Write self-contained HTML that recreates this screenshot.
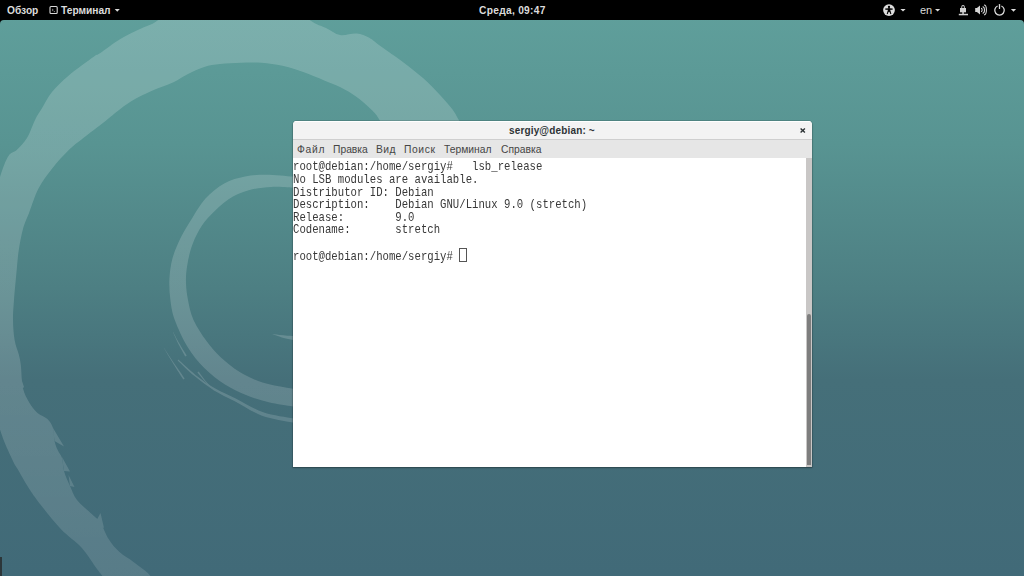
<!DOCTYPE html>
<html><head><meta charset="utf-8">
<style>
html,body{margin:0;padding:0;width:1024px;height:576px;overflow:hidden;background:#000;}
body{position:relative;font-family:"Liberation Sans",sans-serif;}
#bg{position:absolute;left:0;top:0;width:1024px;height:576px;}
#topbar{position:absolute;left:0;top:0;width:1024px;height:20px;background:#000;color:#dcdcdc;font-size:11px;}
#topbar .t{position:absolute;top:4px;font-weight:bold;font-size:10.2px;line-height:13px;white-space:nowrap;}
#win{position:absolute;left:293px;top:121px;width:519px;height:346px;background:#fff;border-radius:4px 4px 0 0;box-shadow:0 0 0 1px rgba(0,0,0,0.1),0 1px 2px rgba(0,0,0,0.3);overflow:hidden;}
#title{position:absolute;left:0;top:0;width:519px;height:18px;background:#f3f3f3;border-bottom:1px solid #cfcfcf;box-shadow:inset 0 1px 0 #fff;}
#title .tx{position:absolute;left:216px;top:4px;font-weight:bold;font-size:10px;letter-spacing:0.15px;line-height:12px;color:#2e3436;white-space:nowrap;}
#menu{position:absolute;left:0;top:19px;width:519px;height:18px;background:#e6e6e6;}
#menu span{position:absolute;top:4px;font-size:10.3px;line-height:12px;color:#454545;white-space:nowrap;}
#term{position:absolute;left:0;top:37px;width:513px;height:309px;background:#fff;}
#term pre{position:absolute;left:0;top:3px;margin:0;font-family:"Liberation Mono",monospace;font-size:10.667px;line-height:11.087px;color:#383838;transform:scaleY(1.15);transform-origin:0 0;}
#trough{position:absolute;left:513px;top:37px;width:6px;height:309px;background:#c9c7c6;}
#slider{position:absolute;left:514px;top:193px;width:4px;height:151px;background:#7e7e7e;border-radius:2px 2px 0 0;}
#cursor{position:absolute;left:166px;top:90px;width:6px;height:12px;border:1px solid #555;}
</style></head>
<body>
<svg id="bg" width="1024" height="576" viewBox="0 0 1024 576">
  <defs>
    <linearGradient id="g" gradientUnits="userSpaceOnUse" x1="0" y1="0" x2="0" y2="576">
      <stop offset="0" stop-color="#60a09c"/>
      <stop offset="0.25" stop-color="#589492"/>
      <stop offset="0.5" stop-color="#4d7f83"/>
      <stop offset="0.66" stop-color="#456f79"/>
      <stop offset="1" stop-color="#416a78"/>
    </linearGradient>
    <mask id="bm" maskUnits="userSpaceOnUse" x="-50" y="-50" width="1124" height="676"><rect x="-50" y="-50" width="1124" height="676" fill="url(#bandg)"/></mask>
    <linearGradient id="bandg" gradientUnits="userSpaceOnUse" x1="0" y1="0" x2="0" y2="576">
      <stop offset="0" stop-color="#fff" stop-opacity="0.18"/>
      <stop offset="0.55" stop-color="#fff" stop-opacity="0.17"/>
      <stop offset="1" stop-color="#fff" stop-opacity="0.12"/>
    </linearGradient>
  </defs>
  <rect x="0" y="0" width="1024" height="576" fill="url(#g)"/>
  <g fill="#fff" mask="url(#bm)">
    <path id="outerband" d="M102.5,576.0 C101.6,574.8 100.5,573.7 97.0,569.0 C93.5,564.3 87.7,554.4 81.7,547.7 C75.7,541.0 67.8,536.2 60.8,528.9 C53.8,521.6 45.1,510.4 40.0,503.9 C34.9,497.4 33.6,495.6 30.0,490.0 C26.4,484.4 21.2,475.2 18.3,470.2 C15.4,465.2 15.6,466.8 12.5,460.0 C9.4,453.2 4.1,442.9 0.0,429.6 C-4.1,416.3 -8.7,401.6 -12.0,380.0 C-15.3,358.4 -20.0,326.7 -20.0,300.0 C-20.0,273.3 -15.3,240.5 -12.0,220.0 C-8.7,199.5 -3.4,187.6 0.0,177.0 C3.4,166.4 5.5,160.8 8.3,156.2 C11.1,151.8 13.6,153.0 16.7,150.0 C19.8,147.0 23.9,143.1 27.0,138.0 C30.1,132.9 32.9,124.1 35.4,119.2 C37.9,114.3 38.9,113.3 41.7,108.8 C44.5,104.2 47.5,97.6 52.0,92.0 C56.5,86.4 61.8,81.3 68.8,75.4 C75.7,69.5 88.5,60.4 93.8,56.7 C99.0,53.0 95.5,56.3 100.0,53.3 C104.5,50.3 113.8,42.9 120.8,38.8 C127.8,34.6 135.4,31.4 141.7,28.3 C147.9,25.2 151.1,25.6 158.3,20.0 C165.5,14.4 164.7,-0.8 185.0,-5.0 C205.3,-9.2 259.2,-9.2 280.0,-5.0 C300.8,-0.8 301.9,14.5 309.6,20.0 C317.3,25.5 320.9,25.5 326.0,28.0 C331.1,30.5 334.9,34.1 340.0,35.0 C345.1,35.9 351.8,33.0 356.7,33.5 C361.6,34.0 365.0,35.5 369.2,37.7 C373.4,40.0 376.1,43.0 381.7,47.0 C387.2,51.0 395.6,56.5 402.5,61.7 C409.4,66.9 417.1,72.8 423.3,78.3 C429.6,83.8 435.1,89.8 440.0,95.0 C444.9,100.2 449.4,105.4 452.5,109.6 C455.6,113.8 455.8,114.9 458.8,120.0 C461.7,125.1 468.1,136.7 470.0,140.0 L390.0,140.0 C388.3,136.7 382.7,125.1 379.6,120.0 C376.5,114.9 375.1,113.4 371.2,109.6 C367.4,105.8 361.9,100.8 356.7,97.0 C351.5,93.2 345.4,89.8 340.0,87.0 C334.6,84.2 330.3,82.9 324.2,80.4 C318.1,77.9 310.2,74.4 303.3,72.0 C296.4,69.6 289.4,67.3 282.5,65.8 C275.6,64.2 268.6,63.2 261.7,62.7 C254.8,62.2 247.8,62.5 240.8,62.7 C233.9,62.9 226.1,63.3 220.0,64.0 C213.9,64.7 209.6,65.2 204.2,66.9 C198.8,68.6 192.7,71.6 187.5,74.2 C182.3,76.8 178.8,79.7 172.9,82.5 C167.0,85.3 158.9,87.7 152.0,90.8 C145.1,93.9 137.1,97.8 131.2,101.2 C125.4,104.7 121.2,108.2 116.7,111.7 C112.2,115.2 109.8,117.6 104.2,122.0 C98.6,126.4 89.2,133.3 83.3,138.0 C77.4,142.7 74.0,144.9 68.8,150.0 C63.5,155.1 57.0,162.3 52.0,168.8 C47.0,175.2 42.3,181.2 38.5,188.5 C34.7,195.8 31.8,205.7 29.2,212.5 C26.6,219.3 24.6,222.9 22.9,229.2 C21.2,235.4 19.8,243.2 18.8,250.0 C17.7,256.8 17.5,261.7 16.7,270.0 C15.9,278.3 14.6,291.7 14.0,300.0 C13.4,308.3 12.9,313.3 13.0,320.0 C13.1,326.7 13.6,334.2 14.6,340.0 C15.6,345.8 17.7,350.4 18.8,354.6 C19.8,358.8 20.1,359.4 20.8,365.0 C21.5,370.6 21.5,381.8 22.9,388.0 C24.3,394.2 26.8,398.3 29.2,402.5 C31.6,406.7 34.5,410.2 37.5,413.0 C40.5,415.8 44.8,416.5 47.4,419.0 C50.0,421.5 51.8,424.3 53.0,428.0 C54.2,431.7 53.7,437.3 54.5,441.0 C55.3,444.7 56.5,447.5 57.8,450.3 C59.0,453.1 61.0,454.6 62.0,458.0 C63.0,461.4 62.7,466.3 64.0,471.0 C65.3,475.7 67.8,481.2 70.0,486.0 C72.2,490.8 73.3,495.3 77.0,500.0 C80.7,504.7 88.1,510.5 92.0,514.3 C95.9,518.1 97.6,518.5 100.4,522.7 C103.2,526.9 105.6,534.4 108.8,539.3 C111.9,544.1 115.0,548.0 119.2,551.8 C123.4,555.6 128.6,558.2 133.8,562.2 C138.9,566.3 147.4,571.4 150.4,576.0 C153.4,580.6 160.4,587.7 152.0,590.0 C143.6,592.3 108.7,590.0 100.0,590.0 Z"/>
    <path id="ring" d="M300.0,407.0 C298.8,406.9 298.2,407.3 293.0,406.5 C287.8,405.7 276.6,404.2 268.8,402.3 C261.0,400.4 253.3,397.9 246.0,395.0 C238.7,392.1 231.9,389.1 225.0,384.6 C218.1,380.1 210.5,374.3 204.3,368.0 C198.1,361.7 192.5,355.0 187.6,347.0 C182.7,339.0 177.7,327.8 174.8,320.0 C171.9,312.2 171.3,306.8 170.4,300.0 C169.5,293.2 169.1,286.1 169.4,279.2 C169.8,272.2 170.6,265.2 172.5,258.3 C174.4,251.4 177.6,244.2 180.8,237.5 C184.1,230.8 187.9,224.9 192.0,218.4 C196.1,211.9 200.1,204.3 205.5,198.5 C210.9,192.7 217.7,187.1 224.2,183.4 C230.8,179.7 238.2,177.9 245.1,176.5 C252.0,175.1 257.9,174.7 265.9,174.7 C273.9,174.7 287.3,176.2 293.0,176.5 C298.7,176.8 298.8,176.8 300.0,176.8 L300.0,187.8 C298.8,187.8 297.8,187.8 293.0,187.7 C288.2,187.5 278.5,186.5 271.1,186.9 C263.7,187.3 255.8,188.2 248.6,190.3 C241.4,192.4 234.4,195.4 228.2,199.5 C222.0,203.6 216.0,209.7 211.2,214.6 C206.4,219.5 202.9,223.6 199.6,229.2 C196.3,234.8 193.3,241.7 191.2,247.9 C189.2,254.2 187.9,260.8 187.0,266.7 C186.1,272.6 185.8,277.8 186.0,283.3 C186.2,288.9 186.8,293.9 188.0,300.0 C189.2,306.1 190.4,313.2 193.5,320.0 C196.6,326.8 201.7,334.6 206.3,340.8 C210.9,347.1 215.3,352.3 220.9,357.5 C226.5,362.7 232.8,367.8 239.7,372.0 C246.6,376.2 253.7,379.7 262.6,382.5 C271.5,385.3 286.8,387.7 293.0,388.8 C299.2,389.8 298.8,389.0 300.0,389.0 Z"/>
    <path d="M177.7,360.4 C180.5,363.0 188.4,371.1 194.5,376.1 C200.6,381.2 207.4,386.3 214.1,390.5 C220.8,394.7 226.9,397.1 234.8,401.3 C242.8,405.5 252.4,412.1 262.0,415.7 C271.6,419.2 286.3,421.2 292.6,422.5 C298.9,423.9 298.5,423.7 299.7,423.9 L300.3,419.1 C299.2,419.0 299.6,419.6 293.4,418.5 C287.2,417.3 272.7,415.6 263.2,412.3 C253.7,409.0 244.1,402.7 236.2,398.7 C228.2,394.7 222.1,392.5 215.3,388.5 C208.5,384.6 201.7,379.7 195.5,374.9 C189.4,370.0 181.2,362.2 178.3,359.6 Z"/>
    <path d="M163.9,348.1 C165.5,350.8 170.3,359.0 173.6,364.3 C176.8,369.5 181.6,377.0 183.3,379.5 L184.7,378.5 C183.0,376.0 177.9,368.8 174.4,363.7 C171.0,358.6 165.8,350.6 164.1,347.9 Z"/>
    <path d="M172.9,332.1 C173.8,334.1 176.5,340.2 178.5,344.3 C180.6,348.3 184.1,354.4 185.2,356.5 L186.8,355.5 C185.6,353.6 181.7,347.7 179.5,343.7 C177.2,339.8 174.2,333.9 173.1,331.9 Z"/>
    <path d="M197.4,372.5 C198.8,374.1 202.8,379.2 205.7,382.3 C208.5,385.4 213.1,389.4 214.6,390.9 L214.8,390.7 C213.4,389.2 209.0,384.9 206.3,381.7 C203.6,378.5 199.9,373.2 198.6,371.5 Z"/>
    <path d="M272.0,334.1 C273.8,334.7 278.2,336.5 282.8,337.7 C287.4,338.8 296.9,340.6 299.7,341.2 L300.3,336.8 C297.5,336.5 287.9,335.8 283.2,335.3 C278.5,334.9 273.9,334.1 272.0,333.9 Z"/>
    <path d="M53,428 L64,446.5 L54.5,441 Z M62,457 L70,471.5 L64,471 Z M68.5,475 L74.5,487 L70,486 Z M94.5,524 L100.5,513 L104,528 Z M21,378 L24,387 L22,389 Z M36,413 L41,418.5 L37,419 Z"/>
  </g>
</svg>
<svg style="position:absolute;left:0;top:0" width="1024" height="576"><path d="M0,20 L4,20 A4,4 0 0 0 0,24 Z M1024,20 L1020,20 A4,4 0 0 1 1024,24 Z" fill="#000"/></svg>
<div style="position:absolute;left:0;top:557px;width:1.5px;height:19px;background:#2c3639"></div>

<div id="topbar">
  <div class="t" style="left:7px">Обзор</div>
  <div class="t" style="left:61px">Терминал</div>
  <div class="t" style="left:479px;letter-spacing:0.3px">Среда, 09:47</div>
  <div class="t" style="left:920px;font-weight:normal;font-size:11px;top:3.5px">en</div>
  <svg style="position:absolute;left:0;top:0" width="1024" height="20" viewBox="0 0 1024 20">
    <g fill="#dcdcdc">
      <path d="M114.7,9 L119.8,9 L117.25,11.7 Z"/>
      <path d="M900.4,9 L905.6,9 L903,11.6 Z"/>
      <path d="M935,9 L940.2,9 L937.6,11.6 Z"/>
      <path d="M1010.9,9 L1016.1,9 L1013.5,11.7 Z"/>
    </g>
    <rect x="50" y="6.5" width="7.2" height="7" rx="1" fill="none" stroke="#d8d8d8" stroke-width="1.1"/>
    <path d="M52,9 L53.3,10 L52,11 M53.8,11.6 L55,11.6" fill="none" stroke="#d8d8d8" stroke-width="0.6"/>
    <!-- accessibility -->
    <circle cx="889" cy="10.05" r="5.9" fill="#dcdcdc"/>
    <circle cx="889" cy="7" r="1.15" fill="#000"/>
    <rect x="885.3" y="8.4" width="7.3" height="1.4" fill="#000"/>
    <rect x="887.8" y="8.3" width="2.5" height="3.6" fill="#000"/>
    <path d="M888.3,11 L887.2,14 M889.8,11 L890.9,14" stroke="#000" stroke-width="1.1"/>
    <!-- network lock -->
    <g fill="#d0d0d0">
      <path d="M961.3,8.2 L961.3,6.8 A1.75,1.9 0 0 1 964.8,6.8 L964.8,8.2 L963.9,8.2 L963.9,6.9 A0.85,1 0 0 0 962.2,6.9 L962.2,8.2 Z"/>
      <rect x="960" y="8" width="6" height="4.3"/>
      <rect x="962.3" y="12" width="1.5" height="2"/>
      <rect x="958.8" y="13.8" width="9.2" height="1.5"/>
    </g>
    <!-- speaker -->
    <path d="M975.2,8.1 L976.9,8.1 L980,5.4 L980,14.6 L976.9,11.9 L975.2,11.9 Z" fill="#d4d4d4"/>
    <g fill="none" stroke="#d8d8d8" stroke-width="1.05">
      <path d="M981,8.4 A1.2,1.6 0 0 1 981,11.6"/>
      <path d="M982.6,6.7 A1.9,3.3 0 0 1 982.6,13.3"/>
      <path d="M984,5.1 A2.4,4.9 0 0 1 984,14.9"/>
    </g>
    <!-- power -->
    <path d="M997.6,6 A4.75,4.75 0 1 0 1001.4,6" fill="none" stroke="#dcdcdc" stroke-width="1.3"/>
    <rect x="998.85" y="4" width="1.3" height="5.1" rx="0.6" fill="#dcdcdc"/>
  </svg>
</div>

<div id="win">
  <div id="title"><div class="tx">sergiy@debian: ~</div><svg style="position:absolute;left:505px;top:4.5px" width="10" height="9" viewBox="0 0 10 9"><path d="M2.6,2.6 L6.9,6.6 M6.9,2.6 L2.6,6.6" stroke="#2e3436" stroke-width="1.4" stroke-linecap="butt"/></svg></div>
  <div id="menu">
    <span style="left:4px;letter-spacing:0.7px">Файл</span>
    <span style="left:40px">Правка</span>
    <span style="left:83px;letter-spacing:0.5px">Вид</span>
    <span style="left:111px;letter-spacing:0.6px">Поиск</span>
    <span style="left:151px">Терминал</span>
    <span style="left:208px">Справка</span>
  </div>
  <div id="term"><pre>root@debian:/home/sergiy#   lsb_release
No LSB modules are available.
Distributor ID: Debian
Description:    Debian GNU/Linux 9.0 (stretch)
Release:        9.0
Codename:       stretch

root@debian:/home/sergiy# </pre><div id="cursor"></div></div>
  <div id="trough"></div>
  <div id="slider"></div>
</div>
</body></html>
